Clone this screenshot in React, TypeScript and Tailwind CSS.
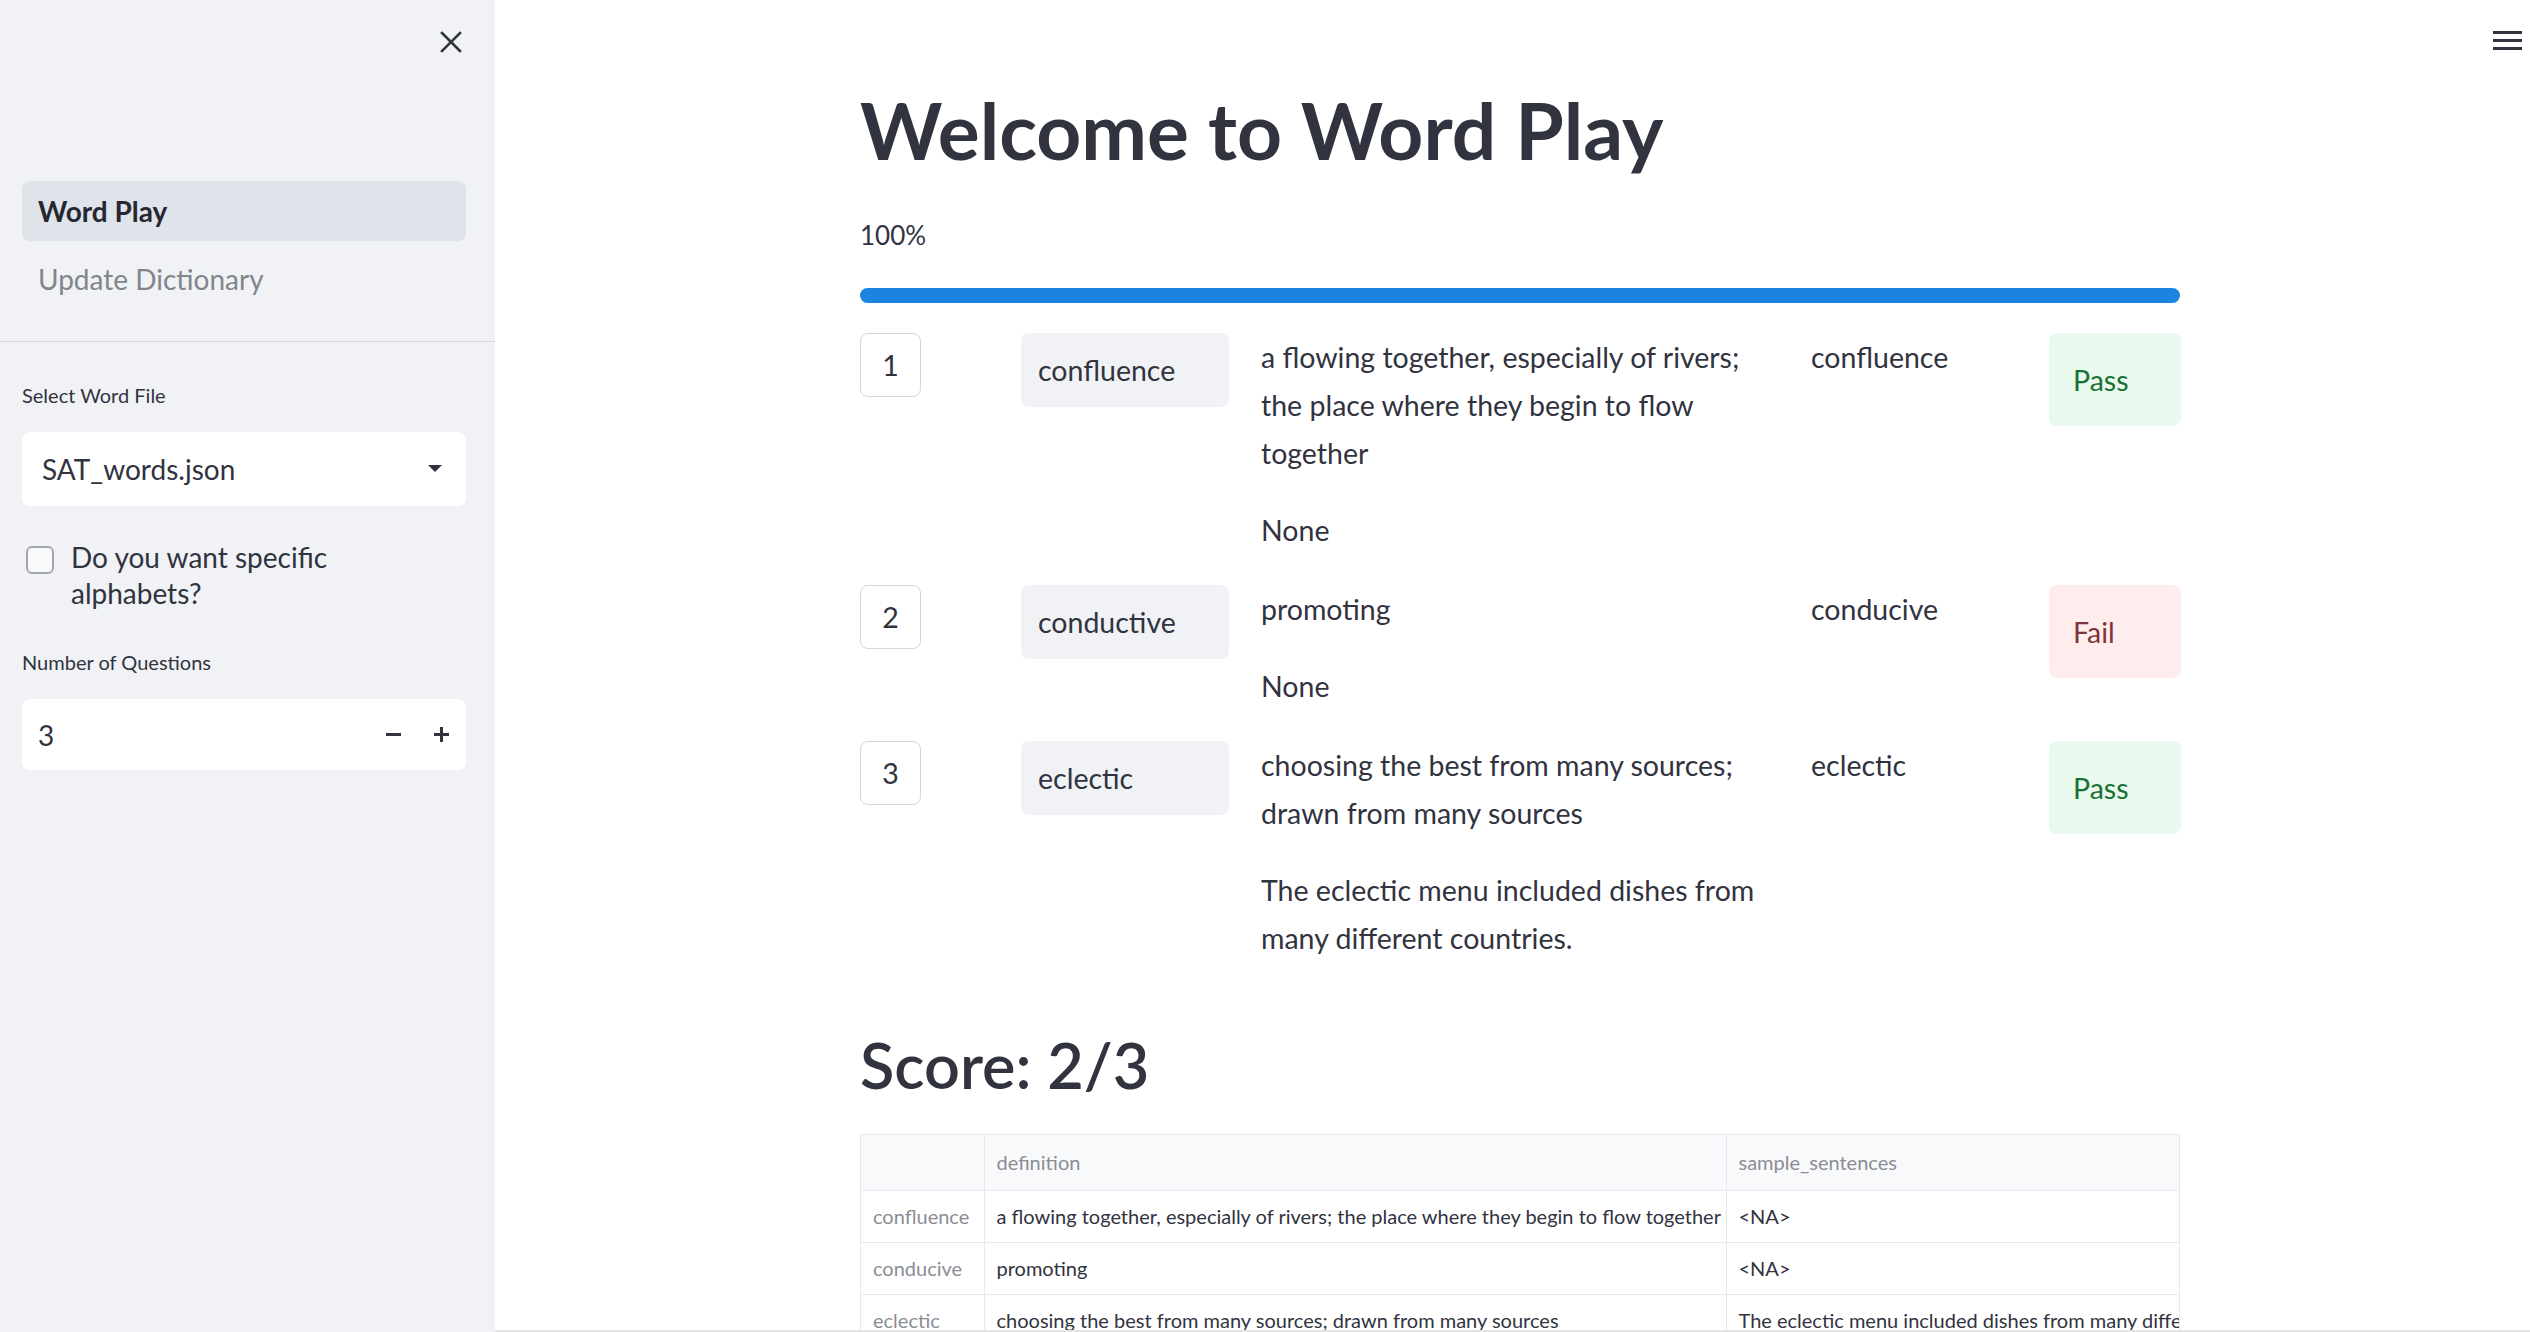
const rows = [
  {
    n: 1,
    guess: "confluence",
    lines: ["a flowing together, especially of rivers; the place where they begin to flow together", "None"],
    answer: "confluence",
    pass: true,
  },
  {
    n: 2,
    guess: "conductive",
    lines: ["promoting", "None"],
    answer: "conducive",
    pass: false,
  },
  {
    n: 3,
    guess: "eclectic",
    lines: ["choosing the best from many sources; drawn from many sources", "The eclectic menu included dishes from many different countries."],
    answer: "eclectic",
    pass: true,
  },
];

const table = [
  ["confluence", "a flowing together, especially of rivers; the place where they begin to flow together", "<NA>"],
  ["conducive", "promoting", "<NA>"],
  ["eclectic", "choosing the best from many sources; drawn from many sources", "The eclectic menu included dishes from many different countries."],
];

function Sidebar() {
  return (
    <aside className="flex h-full w-[495px] shrink-0 flex-col bg-[#f0f2f6]">
      {/* close button */}
      <div className="flex justify-end pr-[33px] pt-[31px]">
        <svg width="22" height="22" viewBox="0 0 22 22" className="text-[#31333f]">
          <path d="M2 2L20 20M20 2L2 20" stroke="currentColor" strokeWidth="2.6" strokeLinecap="square" />
        </svg>
      </div>

      {/* page nav */}
      <nav className="mt-[128px] flex flex-col gap-[8px] pl-[22px] pr-[29px]">
        <div className="flex h-[60px] items-center rounded-lg bg-[#dfe3ea] pl-[16px] text-[28px] font-bold text-[#262730]">
          Word Play
        </div>
        <div className="flex h-[60px] items-center pl-[16px] text-[28px] text-[#83858c]">Update Dictionary</div>
      </nav>
      <div className="mt-[32px] border-t border-[#d3d6dc]" />

      <div className="flex flex-col pl-[22px] pr-[29px] pt-[39px]">
        <label className="text-[20px] leading-[28px] text-[#31333f]">Select Word File</label>
        <div className="mt-[23px] flex h-[74px] items-center justify-between rounded-lg bg-white pl-[20px] pr-[24px] text-[28px] text-[#31333f]">
          <span>SAT_words.json</span>
          <svg width="14" height="8" viewBox="0 0 14 8">
            <path d="M0 0H14L7 7Z" fill="#31333f" />
          </svg>
        </div>

        <div className="mt-[33px] flex items-start gap-[17px] pl-[4px]">
          <div className="mt-[7px] h-[28px] w-[28px] shrink-0 rounded-[6px] border-2 border-[#a3a6ad] bg-[#f8f9fb]" />
          <span className="max-w-[300px] text-[28px] leading-[36px] text-[#31333f]">Do you want specific alphabets?</span>
        </div>

        <label className="mt-[37px] text-[20px] leading-[28px] text-[#31333f]">Number of Questions</label>
        <div className="mt-[23px] flex h-[71px] items-center rounded-lg bg-white pl-[16px] pr-[17px] text-[28px] text-[#31333f]">
          <span className="flex-1">3</span>
          <svg width="15" height="15" viewBox="0 0 15 15" className="mr-[33px]">
            <rect x="0" y="6" width="15" height="3" fill="#31333f" />
          </svg>
          <svg width="15" height="15" viewBox="0 0 15 15">
            <rect x="0" y="6" width="15" height="3" fill="#31333f" />
            <rect x="6" y="0" width="3" height="15" fill="#31333f" />
          </svg>
        </div>
      </div>
    </aside>
  );
}

function QuizRow({ r }: { r: (typeof rows)[number] }) {
  return (
    <div className="grid grid-cols-[161px_240px_550px_238px_132px] text-[28.5px] leading-[48px]">
      <div>
        <div className="flex h-[64px] w-[61px] items-center justify-center rounded-lg border border-[#d6d6d9] bg-white">
          {r.n}
        </div>
      </div>
      <div>
        <div className="flex h-[74px] w-[208px] items-center rounded-lg bg-[#f0f2f6] pl-[17px]">{r.guess}</div>
      </div>
      <div className="flex flex-col gap-[29px] pr-[45px]">
        {r.lines.map((l) => (
          <p key={l}>{l}</p>
        ))}
      </div>
      <div>{r.answer}</div>
      <div>
        {r.pass ? (
          <div className="flex h-[93px] items-center rounded-lg bg-[#e9f9ee] pl-[24px] text-[#177233]">Pass</div>
        ) : (
          <div className="flex h-[93px] items-center rounded-lg bg-[#ffecec] pl-[24px] text-[#7d353b]">Fail</div>
        )}
      </div>
    </div>
  );
}

export default function App() {
  return (
    <div className="flex h-[1332px] w-[2530px] overflow-hidden bg-white font-['Lato',sans-serif] text-[#31333f]">
      <Sidebar />

      <main className="relative h-full flex-1 overflow-hidden border-b-2 border-[#e4e4e4]">
        {/* menu */}
        <svg width="29" height="20" viewBox="0 0 29 20" className="absolute right-[8px] top-[31px]">
          <rect x="0" y="0" width="29" height="3" fill="#31333f" />
          <rect x="0" y="8" width="29" height="3" fill="#31333f" />
          <rect x="0" y="16" width="29" height="3" fill="#31333f" />
        </svg>

        <div className="ml-[365px] flex w-[1321px] flex-col">
          <h1 className="mt-[84px] text-[78.5px] font-bold leading-[92px] text-[#31333f]">Welcome to Word Play</h1>
          <div className="mt-[41px] text-[26px] leading-[36px]">100%</div>
          <div className="mt-[35px] h-[15px] w-[1320px] rounded-full bg-[#1c83e1]" />

          <div className="mt-[30px] flex flex-col gap-[31px]">
            {rows.map((r) => (
              <QuizRow key={r.n} r={r} />
            ))}
          </div>

          <h2 className="mt-[65px] text-[63px] font-semibold leading-[76px]">Score: 2/3</h2>

          <div className="mt-[31px] w-[1320px] overflow-hidden border border-[#e6e9ef]">
            <table className="w-[1320px] table-fixed border-collapse text-[20px]">
              <colgroup>
                <col className="w-[123px]" />
                <col className="w-[742px]" />
                <col className="w-[455px]" />
              </colgroup>
              <thead>
                <tr className="h-[55px] bg-[#f8f9fb] text-left text-[#8b8d94]">
                  <th className="border-b border-r border-[#e6e9ef] font-normal" />
                  <th className="border-b border-r border-[#e6e9ef] px-[12px] font-normal">definition</th>
                  <th className="border-b border-[#e6e9ef] px-[12px] font-normal">sample_sentences</th>
                </tr>
              </thead>
              <tbody>
                {table.map((t) => (
                  <tr key={t[0]} className="h-[52px]">
                    <td className="border-b border-r border-[#e6e9ef] px-[12px] text-[#8b8d94]">{t[0]}</td>
                    <td className="whitespace-nowrap border-b border-r border-[#e6e9ef] px-[12px]">{t[1]}</td>
                    <td className="overflow-hidden whitespace-nowrap border-b border-[#e6e9ef] pl-[12px]">{t[2]}</td>
                  </tr>
                ))}
              </tbody>
            </table>
          </div>
        </div>
      </main>
    </div>
  );
}
